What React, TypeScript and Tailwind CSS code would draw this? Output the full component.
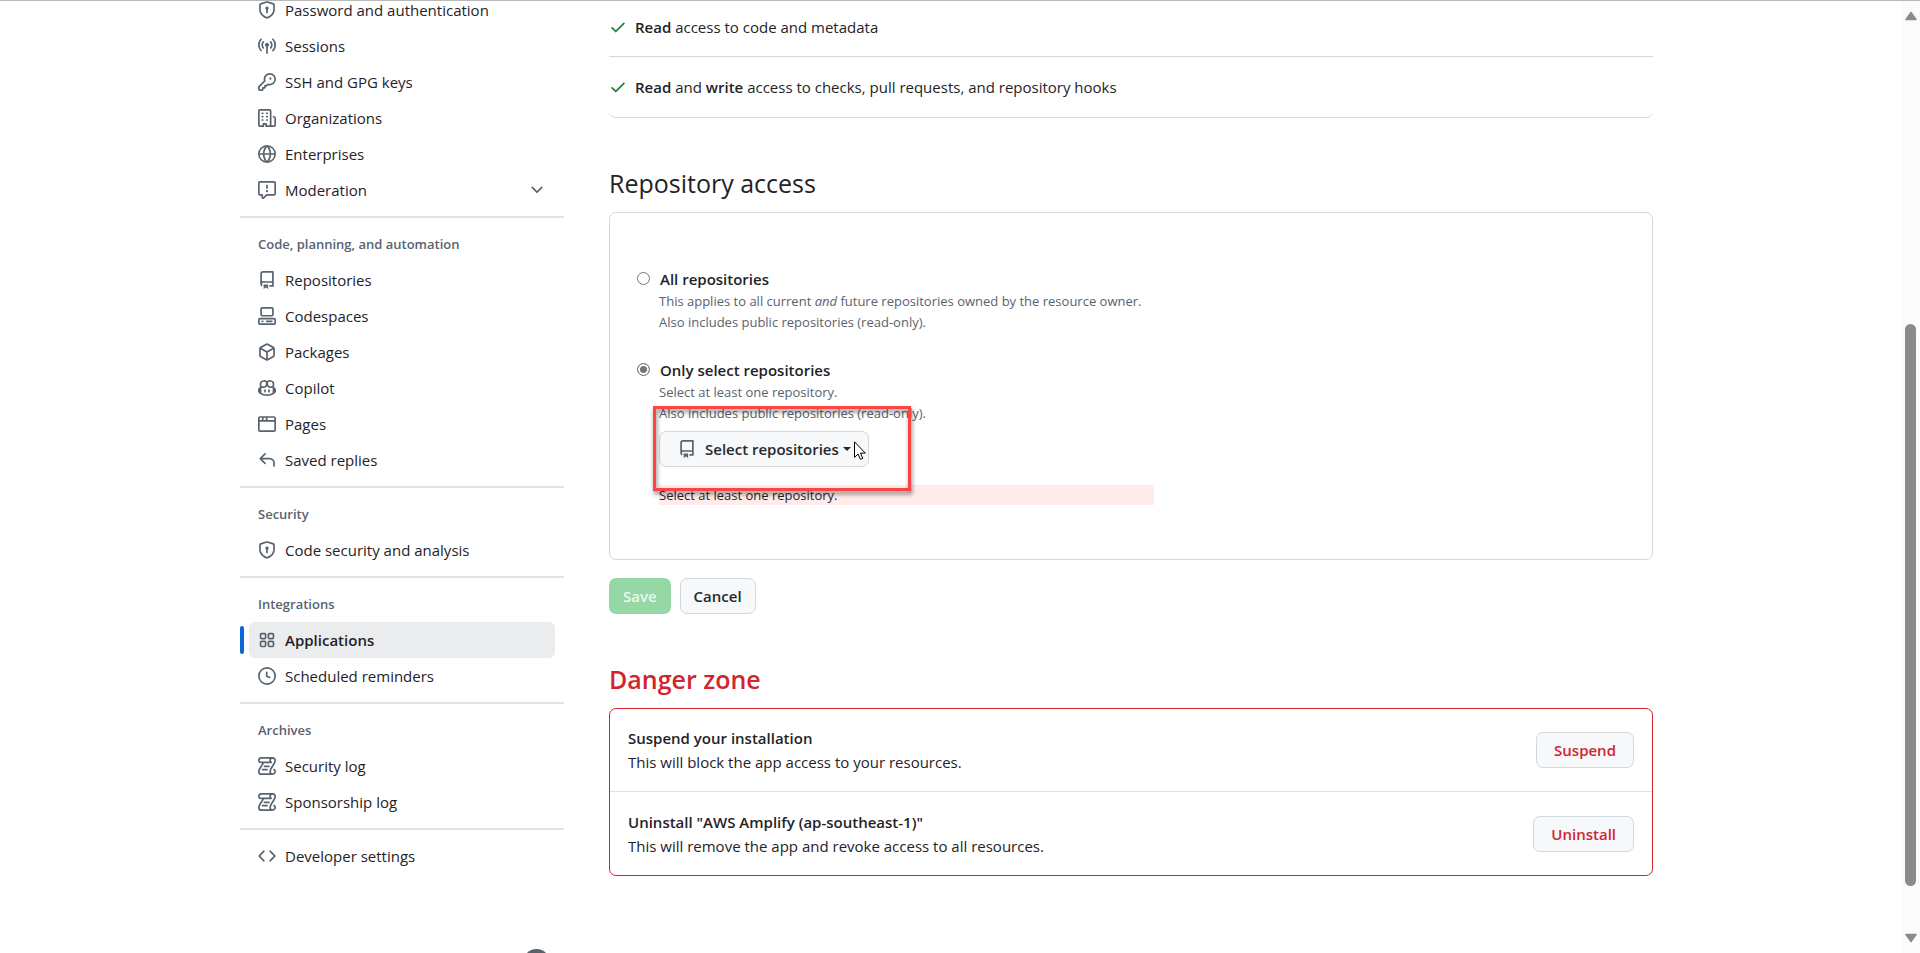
import type { ReactNode } from "react";

const paths = {
  shieldLock:
    "m8.533.133 5.25 1.68A1.75 1.75 0 0 1 15 3.48V7c0 1.566-.32 3.182-1.303 4.682-.983 1.498-2.585 2.813-5.032 3.855a1.697 1.697 0 0 1-1.33 0c-2.447-1.042-4.049-2.357-5.032-3.855C1.32 10.182 1 8.566 1 7V3.48a1.755 1.755 0 0 1 1.217-1.667l5.25-1.68a1.748 1.748 0 0 1 1.066 0Zm-.61 1.429.001.001-5.25 1.68a.251.251 0 0 0-.174.237V7c0 1.36.275 2.666 1.057 3.859.784 1.194 2.121 2.342 4.366 3.298a.196.196 0 0 0 .154 0c2.245-.957 3.582-2.103 4.366-3.297C13.225 9.666 13.5 8.358 13.5 7V3.48a.25.25 0 0 0-.174-.238l-5.25-1.68a.25.25 0 0 0-.153 0ZM9.5 6.5c0 .536-.286 1.032-.75 1.3v2.45a.75.75 0 0 1-1.5 0V7.8A1.5 1.5 0 1 1 9.5 6.5Z",
  broadcast:
    "M8.75 8.582v5.668a.75.75 0 0 1-1.5 0V8.582a1.75 1.75 0 1 1 1.5 0Zm3.983-7.125a.75.75 0 0 1 1.06.026A7.976 7.976 0 0 1 16 7c0 2.139-.84 4.083-2.207 5.517a.75.75 0 1 1-1.086-1.034A6.474 6.474 0 0 0 14.5 7a6.474 6.474 0 0 0-1.793-4.483.75.75 0 0 1 .026-1.06Zm-9.466 0c.3.286.312.76.026 1.06A6.474 6.474 0 0 0 1.5 7a6.47 6.47 0 0 0 1.793 4.483.75.75 0 0 1-1.086 1.034A7.973 7.973 0 0 1 0 7c0-2.139.84-4.083 2.207-5.517a.75.75 0 0 1 1.06-.026Zm8.556 2.321A4.988 4.988 0 0 1 13 7a4.988 4.988 0 0 1-1.177 3.222.75.75 0 1 1-1.146-.967A3.487 3.487 0 0 0 11.5 7c0-.86-.309-1.645-.823-2.255a.75.75 0 0 1 1.146-.967Zm-6.492.958A3.48 3.48 0 0 0 4.5 7a3.48 3.48 0 0 0 .823 2.255.75.75 0 0 1-1.146.967A4.981 4.981 0 0 1 3 7a4.982 4.982 0 0 1 1.188-3.236.75.75 0 1 1 1.143.972Z",
  key: "M10.5 0a5.499 5.499 0 1 1-1.288 10.848l-.932.932a.749.749 0 0 1-.53.22H7v.75a.749.749 0 0 1-.22.53l-.5.5a.749.749 0 0 1-.53.22H5v.75a.749.749 0 0 1-.22.53l-.5.5a.749.749 0 0 1-.53.22h-2A1.75 1.75 0 0 1 0 14.25v-2c0-.199.079-.389.22-.53l4.932-4.932A5.5 5.5 0 0 1 10.5 0Zm-4 5.5c-.001.431.069.86.205 1.269a.75.75 0 0 1-.181.768L1.5 12.56v1.69c0 .138.112.25.25.25h1.69l.06-.06v-1.19a.75.75 0 0 1 .75-.75h1.19l.06-.06v-1.19a.75.75 0 0 1 .75-.75h1.19l1.023-1.025a.75.75 0 0 1 .768-.18A4 4 0 1 0 6.5 5.5ZM11 6a1 1 0 1 1 0-2 1 1 0 0 1 0 2Z",
  organization:
    "M1.75 16A1.75 1.75 0 0 1 0 14.25V1.75C0 .784.784 0 1.75 0h8.5C11.216 0 12 .784 12 1.75v12.5c0 .085-.006.168-.018.25h2.268a.25.25 0 0 0 .25-.25V8.285a.25.25 0 0 0-.111-.208l-1.055-.703a.749.749 0 1 1 .832-1.248l1.055.703c.487.325.779.871.779 1.456v5.965A1.75 1.75 0 0 1 14.25 16h-3.5a.766.766 0 0 1-.197-.026c-.099.017-.2.026-.303.026h-3a.75.75 0 0 1-.75-.75V14h-1v1.25a.75.75 0 0 1-.75.75Zm-.25-1.75c0 .138.112.25.25.25H4v-1.25a.75.75 0 0 1 .75-.75h2.5a.75.75 0 0 1 .75.75v1.25h2.25a.25.25 0 0 0 .25-.25V1.75a.25.25 0 0 0-.25-.25h-8.5a.25.25 0 0 0-.25.25ZM3.75 6h.5a.75.75 0 0 1 0 1.5h-.5a.75.75 0 0 1 0-1.5ZM3 3.75A.75.75 0 0 1 3.75 3h.5a.75.75 0 0 1 0 1.5h-.5A.75.75 0 0 1 3 3.75Zm4 3A.75.75 0 0 1 7.75 6h.5a.75.75 0 0 1 0 1.5h-.5A.75.75 0 0 1 7 6.75ZM7.75 3h.5a.75.75 0 0 1 0 1.5h-.5a.75.75 0 0 1 0-1.5ZM3 9.75A.75.75 0 0 1 3.75 9h.5a.75.75 0 0 1 0 1.5h-.5A.75.75 0 0 1 3 9.75ZM7.75 9h.5a.75.75 0 0 1 0 1.5h-.5a.75.75 0 0 1 0-1.5Z",
  globe:
    "M8 0a8 8 0 1 1 0 16A8 8 0 0 1 8 0ZM5.78 8.75a9.64 9.64 0 0 0 1.363 4.177c.255.426.542.832.857 1.215.245-.296.551-.705.857-1.215A9.64 9.64 0 0 0 10.22 8.75Zm4.44-1.5a9.64 9.64 0 0 0-1.363-4.177c-.307-.51-.612-.919-.857-1.215a9.927 9.927 0 0 0-.857 1.215A9.64 9.64 0 0 0 5.78 7.25Zm-5.944 1.5H1.543a6.507 6.507 0 0 0 4.666 5.5c-.123-.181-.24-.365-.352-.552-.715-1.192-1.437-2.874-1.581-4.948Zm-2.733-1.5h2.733c.144-2.074.866-3.756 1.58-4.948.12-.197.237-.381.353-.552a6.507 6.507 0 0 0-4.666 5.5Zm10.181 1.5c-.144 2.074-.866 3.756-1.58 4.948-.12.197-.237.381-.353.552a6.507 6.507 0 0 0 4.666-5.5Zm2.733-1.5a6.507 6.507 0 0 0-4.666-5.5c.123.181.24.365.353.552.714 1.192 1.436 2.874 1.58 4.948Z",
  report:
    "M0 1.75C0 .784.784 0 1.75 0h12.5C15.216 0 16 .784 16 1.75v9.5A1.75 1.75 0 0 1 14.25 13H8.06l-2.573 2.573A1.458 1.458 0 0 1 3 14.543V13H1.75A1.75 1.75 0 0 1 0 11.25Zm1.75-.25a.25.25 0 0 0-.25.25v9.5c0 .138.112.25.25.25h2a.75.75 0 0 1 .75.75v2.19l2.72-2.72a.749.749 0 0 1 .53-.22h6.5a.25.25 0 0 0 .25-.25v-9.5a.25.25 0 0 0-.25-.25Zm7 2.25v2.5a.75.75 0 0 1-1.5 0v-2.5a.75.75 0 0 1 1.5 0ZM9 9a1 1 0 1 1-2 0 1 1 0 0 1 2 0Z",
  chevronDown:
    "M12.78 5.22a.749.749 0 0 1 0 1.06l-4.25 4.25a.749.749 0 0 1-1.06 0L3.22 6.28a.749.749 0 1 1 1.06-1.06L8 8.939l3.72-3.719a.749.749 0 0 1 1.06 0Z",
  repo: "M2 2.5A2.5 2.5 0 0 1 4.5 0h8.75a.75.75 0 0 1 .75.75v12.5a.75.75 0 0 1-.75.75h-2.5a.75.75 0 0 1 0-1.5h1.75v-2h-8a1 1 0 0 0-.714 1.7.75.75 0 1 1-1.072 1.05A2.495 2.495 0 0 1 2 11.5Zm10.5-1h-8a1 1 0 0 0-1 1v6.708A2.486 2.486 0 0 1 4.5 9h8ZM5 12.25a.25.25 0 0 1 .25-.25h3.5a.25.25 0 0 1 .25.25v3.25a.25.25 0 0 1-.4.2l-1.45-1.087a.249.249 0 0 0-.3 0L5.4 15.7a.25.25 0 0 1-.4-.2Z",
  codespaces:
    "M0 11.25c0-.966.784-1.75 1.75-1.75h12.5c.966 0 1.75.784 1.75 1.75v3A1.75 1.75 0 0 1 14.25 16H1.75A1.75 1.75 0 0 1 0 14.25Zm2-9.5C2 .784 2.784 0 3.75 0h8.5C13.216 0 14 .784 14 1.75v5a1.75 1.75 0 0 1-1.75 1.75h-8.5A1.75 1.75 0 0 1 2 6.75Zm1.75-.25a.25.25 0 0 0-.25.25v5c0 .138.112.25.25.25h8.5a.25.25 0 0 0 .25-.25v-5a.25.25 0 0 0-.25-.25Zm-2 9.5a.25.25 0 0 0-.25.25v3c0 .138.112.25.25.25h12.5a.25.25 0 0 0 .25-.25v-3a.25.25 0 0 0-.25-.25ZM7 12.75a.75.75 0 0 1 .75-.75h4.5a.75.75 0 0 1 0 1.5h-4.5a.75.75 0 0 1-.75-.75Zm-4 0a.75.75 0 0 1 .75-.75h.5a.75.75 0 0 1 0 1.5h-.5a.75.75 0 0 1-.75-.75Z",
  package:
    "m8.878.392 5.25 3.045c.54.314.872.89.872 1.514v6.098a1.75 1.75 0 0 1-.872 1.514l-5.25 3.045a1.75 1.75 0 0 1-1.756 0l-5.25-3.045A1.75 1.75 0 0 1 1 11.049V4.951c0-.624.332-1.201.872-1.514L7.122.392a1.75 1.75 0 0 1 1.756 0ZM7.875 1.69l-4.63 2.685L8 7.133l4.755-2.758-4.63-2.685a.248.248 0 0 0-.25 0ZM2.5 5.677v5.372c0 .09.047.171.125.216l4.625 2.683V8.432Zm6.25 8.271 4.625-2.683a.25.25 0 0 0 .125-.216V5.677L8.75 8.432Z",
  copilot:
    "M7.998 15.035c-4.562 0-7.873-2.914-7.998-3.749V9.338c.085-.628.677-1.686 1.588-2.065.013-.07.024-.143.036-.218.029-.183.06-.384.126-.612-.201-.508-.254-1.084-.254-1.656 0-.87.128-1.769.693-2.484.579-.733 1.494-1.124 2.724-1.261 1.206-.134 2.262.034 2.944.765.05.053.096.108.139.165.044-.057.094-.112.143-.165.682-.731 1.738-.899 2.944-.765 1.23.137 2.145.528 2.724 1.261.566.715.693 1.614.693 2.484 0 .572-.053 1.148-.254 1.656.066.228.098.429.126.612.012.076.024.148.037.218.924.385 1.522 1.471 1.591 2.095v1.872c0 .766-3.351 3.795-8.002 3.795Zm0-1.485c2.28 0 4.584-1.11 5.002-1.433V7.862l-.023-.116c-.49.21-1.075.291-1.727.291-1.146 0-2.059-.327-2.71-.991A3.222 3.222 0 0 1 8 6.303a3.24 3.24 0 0 1-.544.743c-.65.664-1.563.991-2.71.991-.652 0-1.236-.081-1.727-.291l-.023.116v4.255c.419.323 2.722 1.433 5.002 1.433ZM6.762 2.83c-.193-.206-.637-.413-1.682-.297-1.019.113-1.479.404-1.713.7-.247.312-.369.789-.369 1.554 0 .793.129 1.171.308 1.371.162.181.519.379 1.442.379.853 0 1.339-.235 1.638-.54.315-.322.527-.827.617-1.553.117-.935-.037-1.395-.241-1.614Zm4.155-.297c-1.044-.116-1.488.091-1.681.297-.204.219-.359.679-.242 1.614.091.726.303 1.231.618 1.553.299.305.784.54 1.638.54.922 0 1.28-.198 1.442-.379.179-.2.308-.578.308-1.371 0-.765-.123-1.242-.37-1.554-.233-.296-.693-.587-1.713-.7ZM6.25 9.037a.75.75 0 0 1 .75.75v1.501a.75.75 0 0 1-1.5 0V9.787a.75.75 0 0 1 .75-.75Zm4.25.75v1.501a.75.75 0 0 1-1.5 0V9.787a.75.75 0 0 1 1.5 0Z",
  browser:
    "M0 2.75C0 1.784.784 1 1.75 1h12.5c.966 0 1.75.784 1.75 1.75v10.5A1.75 1.75 0 0 1 14.25 15H1.75A1.75 1.75 0 0 1 0 13.25ZM14.5 6h-13v7.25c0 .138.112.25.25.25h12.5a.25.25 0 0 0 .25-.25Zm-6-3.5v2h6V2.75a.25.25 0 0 0-.25-.25ZM5 2.5v2h2v-2Zm-3.25 0a.25.25 0 0 0-.25.25V4.5h2v-2Z",
  reply:
    "M6.78 1.97a.75.75 0 0 1 0 1.06L3.81 6h6.44A4.75 4.75 0 0 1 15 10.75v2.5a.75.75 0 0 1-1.5 0v-2.5a3.25 3.25 0 0 0-3.25-3.25H3.81l2.97 2.97a.749.749 0 0 1-.326 1.275.749.749 0 0 1-.734-.215L1.47 7.28a.75.75 0 0 1 0-1.06l4.25-4.25a.75.75 0 0 1 1.06 0Z",
  apps: "M1.5 3.25c0-.966.784-1.75 1.75-1.75h2.5c.966 0 1.75.784 1.75 1.75v2.5A1.75 1.75 0 0 1 5.75 7.5h-2.5A1.75 1.75 0 0 1 1.5 5.75Zm7 0c0-.966.784-1.75 1.75-1.75h2.5c.966 0 1.75.784 1.75 1.75v2.5a1.75 1.75 0 0 1-1.75 1.75h-2.5A1.75 1.75 0 0 1 8.5 5.75Zm-7 7c0-.966.784-1.75 1.75-1.75h2.5c.966 0 1.75.784 1.75 1.75v2.5a1.75 1.75 0 0 1-1.75 1.75h-2.5a1.75 1.75 0 0 1-1.75-1.75Zm7 0c0-.966.784-1.75 1.75-1.75h2.5c.966 0 1.75.784 1.75 1.75v2.5a1.75 1.75 0 0 1-1.75 1.75h-2.5a1.75 1.75 0 0 1-1.75-1.75ZM3.25 3a.25.25 0 0 0-.25.25v2.5c0 .138.112.25.25.25h2.5A.25.25 0 0 0 6 5.75v-2.5A.25.25 0 0 0 5.75 3Zm7 0a.25.25 0 0 0-.25.25v2.5c0 .138.112.25.25.25h2.5a.25.25 0 0 0 .25-.25v-2.5a.25.25 0 0 0-.25-.25Zm-7 7a.25.25 0 0 0-.25.25v2.5c0 .138.112.25.25.25h2.5a.25.25 0 0 0 .25-.25v-2.5a.25.25 0 0 0-.25-.25Zm7 0a.25.25 0 0 0-.25.25v2.5c0 .138.112.25.25.25h2.5a.25.25 0 0 0 .25-.25v-2.5a.25.25 0 0 0-.25-.25Z",
  clock:
    "M8 0a8 8 0 1 1 0 16A8 8 0 0 1 8 0ZM1.5 8a6.5 6.5 0 1 0 13 0 6.5 6.5 0 0 0-13 0Zm7-3.25v2.992l2.028.812a.75.75 0 0 1-.557 1.392l-2.5-1A.751.751 0 0 1 7 8.25v-3.5a.75.75 0 0 1 1.5 0Z",
  log: "M5 8.25a.75.75 0 0 1 .75-.75h4a.75.75 0 0 1 0 1.5h-4A.75.75 0 0 1 5 8.25ZM4 10.5A.75.75 0 0 0 4 12h4a.75.75 0 0 0 0-1.5H4ZM13-.005c1.654 0 3 1.328 3 3 0 .982-.338 1.933-.783 2.818-.443.879-1.028 1.758-1.582 2.588l-.011.017c-.568.853-1.104 1.659-1.501 2.446-.398.789-.623 1.494-.623 2.136a1.5 1.5 0 1 0 2.333-1.248.75.75 0 0 1 .834-1.246A3 3 0 0 1 13 16H3a3 3 0 0 1-3-3c0-1.582.891-3.135 1.777-4.506.209-.322.418-.637.623-.946.473-.709.923-1.386 1.287-2.048H2.51c-.576 0-1.381-.133-1.907-.783A2.68 2.68 0 0 1 0 2.995a3 3 0 0 1 3-3Zm0 1.5a1.5 1.5 0 0 0-1.5 1.5c0 .476.223.834.667 1.132A.75.75 0 0 1 11.75 5.5H5.368c-.467 1.003-1.141 2.015-1.773 2.963-.192.289-.381.571-.558.845C2.13 10.711 1.5 11.916 1.5 13A1.5 1.5 0 0 0 3 14.5h7.401A2.989 2.989 0 0 1 10 13c0-.979.338-1.928.784-2.812.441-.874 1.023-1.748 1.575-2.576l.017-.026c.568-.853 1.103-1.658 1.501-2.448.398-.79.623-1.497.623-2.143 0-.838-.669-1.5-1.5-1.5Zm-10 0a1.5 1.5 0 0 0-1.5 1.5c0 .321.1.569.27.778.097.12.325.227.74.227h7.674A2.737 2.737 0 0 1 10 2.995c0-.546.146-1.059.401-1.5Z",
  code: "m11.28 3.22 4.25 4.25a.75.75 0 0 1 0 1.06l-4.25 4.25a.749.749 0 0 1-1.275-.326.749.749 0 0 1 .215-.734L13.94 8l-3.72-3.72a.749.749 0 0 1 .326-1.275.749.749 0 0 1 .734.215Zm-6.56 0a.751.751 0 0 1 1.042.018.751.751 0 0 1 .018 1.042L2.06 8l3.72 3.72a.749.749 0 0 1-.326 1.275.749.749 0 0 1-.734-.215L.47 8.53a.75.75 0 0 1 0-1.06Z",
  check:
    "M13.78 4.22a.75.75 0 0 1 0 1.06l-7.25 7.25a.75.75 0 0 1-1.06 0L2.22 9.28a.751.751 0 0 1 .018-1.042.751.751 0 0 1 1.042-.018L6 10.94l6.72-6.72a.75.75 0 0 1 1.06 0Z",
  mark: "M8 0c4.42 0 8 3.58 8 8a8.013 8.013 0 0 1-5.45 7.59c-.4.08-.55-.17-.55-.38 0-.27.01-1.13.01-2.2 0-.75-.25-1.23-.54-1.48 1.78-.2 3.65-.88 3.65-3.95 0-.88-.31-1.59-.82-2.15.08-.2.36-1.02-.08-2.12 0 0-.67-.22-2.2.82-.64-.18-1.32-.27-2-.27-.68 0-1.36.09-2 .27-1.53-1.03-2.2-.82-2.2-.82-.44 1.1-.16 1.92-.08 2.12-.51.56-.82 1.28-.82 2.15 0 3.06 1.86 3.75 3.64 3.95-.23.2-.44.55-.51 1.07-.46.21-1.61.55-2.33-.66-.15-.24-.6-.83-1.23-.82-.67.01-.27.38.01.53.34.19.73.9.82 1.13.16.45.68 1.31 2.69.94 0 .67.01 1.3.01 1.49 0 .21-.15.45-.55.38A7.995 7.995 0 0 1 0 8c0-4.42 3.58-8 8-8Z",
};

type IconName = keyof typeof paths;

function Icon({ name, className = "size-[18px] text-[#59636e]" }: { name: IconName; className?: string }) {
  return (
    <svg viewBox="0 0 16 16" fill="currentColor" aria-hidden="true" className={`shrink-0 ${className}`}>
      <path d={paths[name]} />
    </svg>
  );
}

type Item = { icon: IconName; label: string; active?: boolean; expandable?: boolean };

const groups: { title?: string; items: Item[] }[] = [
  {
    items: [
      { icon: "shieldLock", label: "Password and authentication" },
      { icon: "broadcast", label: "Sessions" },
      { icon: "key", label: "SSH and GPG keys" },
      { icon: "organization", label: "Organizations" },
      { icon: "globe", label: "Enterprises" },
      { icon: "report", label: "Moderation", expandable: true },
    ],
  },
  {
    title: "Code, planning, and automation",
    items: [
      { icon: "repo", label: "Repositories" },
      { icon: "codespaces", label: "Codespaces" },
      { icon: "package", label: "Packages" },
      { icon: "copilot", label: "Copilot" },
      { icon: "browser", label: "Pages" },
      { icon: "reply", label: "Saved replies" },
    ],
  },
  { title: "Security", items: [{ icon: "shieldLock", label: "Code security and analysis" }] },
  {
    title: "Integrations",
    items: [
      { icon: "apps", label: "Applications", active: true },
      { icon: "clock", label: "Scheduled reminders" },
    ],
  },
  {
    title: "Archives",
    items: [
      { icon: "log", label: "Security log" },
      { icon: "log", label: "Sponsorship log" },
    ],
  },
  { items: [{ icon: "code", label: "Developer settings" }] },
];

function NavItem({ icon, label, active, expandable }: Item) {
  const row = "flex h-9 w-full items-center gap-[9px] rounded-md px-[9px] text-left";
  if (expandable) {
    return (
      <li className="px-[9px]">
        <button type="button" aria-expanded="false" className={row}>
          <Icon name={icon} />
          <span className="grow">{label}</span>
          <Icon name="chevronDown" />
        </button>
      </li>
    );
  }
  return (
    <li className="relative px-[9px]">
      {active && <span className="absolute top-1 bottom-1 left-0 w-1 rounded-md bg-[#0969da]" />}
      <a
        href="#"
        aria-current={active ? "page" : undefined}
        className={active ? `${row} bg-[#ebecee] font-semibold` : row}
      >
        <Icon name={icon} />
        {label}
      </a>
    </li>
  );
}

function Sidebar() {
  return (
    <nav aria-label="Settings" className="w-[324px] shrink-0">
      {groups.map((group, i) => (
        <section key={i} className={i > 0 ? "mt-2 border-t-2 border-[#dfe3e8] pt-2" : ""}>
          {group.title && (
            <h3 className="flex h-9 items-center px-[18px] text-[13px] font-semibold text-[#59636e]">{group.title}</h3>
          )}
          <ul>
            {group.items.map((item) => (
              <NavItem key={item.label} {...item} />
            ))}
          </ul>
        </section>
      ))}
    </nav>
  );
}

function Button({ children, className = "px-[13px] text-[#25292e]" }: { children: ReactNode; className?: string }) {
  return (
    <button
      type="button"
      className={`flex h-9 items-center rounded-[7px] border border-[#d1d9e0] bg-[#f6f8fa] font-semibold ${className}`}
    >
      {children}
    </button>
  );
}

function DangerRow({ title, text, action }: { title: string; text: string; action: string }) {
  return (
    <li className="flex h-[83px] items-center justify-between px-[18px]">
      <div className="leading-6">
        <strong className="block font-semibold">{title}</strong>
        <p>{text}</p>
      </div>
      <Button className="px-[17px] text-[#d1242f]">{action}</Button>
    </li>
  );
}

function Permissions() {
  return (
    <ul className="divide-y divide-[#d1d9e0] rounded-b-[7px] border-b border-[#d1d9e0]">
      <li className="flex h-[60px] items-center gap-2">
        <Icon name="check" className="size-[18px] text-[#1a7f37]" />
        <span>
          <strong className="font-semibold">Read</strong> access to code and metadata
        </span>
      </li>
      <li className="flex h-[60px] items-center gap-2">
        <Icon name="check" className="size-[18px] text-[#1a7f37]" />
        <span>
          <strong className="font-semibold">Read</strong> and <strong className="font-semibold">write</strong> access to
          checks, pull requests, and repository hooks
        </span>
      </li>
    </ul>
  );
}

const radio =
  "mt-[5px] size-[13px] shrink-0 appearance-none rounded-full border border-[#767676] bg-white checked:bg-[#767676] checked:shadow-[inset_0_0_0_2px_white]";

function RepositoryAccess() {
  return (
    <form>
      <div className="rounded-[7px] border border-[#d1d9e0] px-[27px] py-[54px]">
        <div className="flex gap-[9px]">
          <input id="all" type="radio" name="access" className={radio} aria-describedby="all-note" />
          <div>
            <label htmlFor="all" className="block pl-px font-semibold">
              All repositories
            </label>
            <p id="all-note" className="text-[13px] leading-[21px] text-[#59636e]">
              This applies to all current <em>and</em> future repositories owned by the resource owner.
              <br />
              Also includes public repositories (read-only).
            </p>
          </div>
        </div>
        <div className="mt-[25px] flex gap-[9px]">
          <input id="select" type="radio" name="access" defaultChecked className={radio} aria-describedby="select-note" />
          <div className="grow">
            <label htmlFor="select" className="block pl-px font-semibold">
              Only select repositories
            </label>
            <p id="select-note" className="text-[13px] leading-[21px] text-[#59636e]">
              Select at least one repository.
              <br />
              Also includes public repositories (read-only).
            </p>
            <div className="relative mt-[7px] w-fit">
              <Button className="gap-[9px] pr-[17px] pl-[18px] text-[#25292e]">
                <Icon name="repo" />
                <span className="flex items-center gap-1">
                  Select repositories
                  <span className="border-x-4 border-t-4 border-x-transparent border-t-current" />
                </span>
              </Button>
              <span className="pointer-events-none absolute -top-[25px] -left-[6px] z-10 h-[85px] w-[258px] border-3 border-[#fd4444] drop-shadow-[1px_3px_2px_rgba(0,0,0,0.5)]" />
              <svg
                viewBox="0 0 12 19"
                aria-hidden="true"
                className="pointer-events-none absolute top-[10px] left-[195px] z-20 h-[19px] w-3"
              >
                <path
                  d="M.5.8v15.6l3.6-3.4 2.3 5.3 2.4-1-2.3-5.2h4.8Z"
                  fill="white"
                  stroke="black"
                  strokeWidth="1"
                />
              </svg>
            </div>
            <p className="mt-[18px] max-w-[495px] bg-[#ffebe9] text-[13px] leading-5">Select at least one repository.</p>
          </div>
        </div>
      </div>
      <div className="mt-[18px] flex gap-[9px]">
        <button type="submit" disabled className="h-9 rounded-[7px] bg-[#95d8a6] px-[14px] font-semibold text-[#eaf7ed]">
          Save
        </button>
        <Button>Cancel</Button>
      </div>
    </form>
  );
}

function Scrollbar() {
  return (
    <div aria-hidden="true" className="flex w-[19px] shrink-0 flex-col items-center bg-[#fbfbfb] py-[10px]">
      <svg viewBox="0 0 12 10" className="h-[10px] w-3 text-[#8b8b8b]">
        <path d="M6 1.5 11 8.5H1Z" fill="currentColor" stroke="currentColor" strokeWidth="1.5" strokeLinejoin="round" />
      </svg>
      <div className="grow-[303]" />
      <div className="w-[11px] grow-[561] rounded-full bg-[#8b8b8b]" />
      <div className="grow-[47]" />
      <svg viewBox="0 0 12 10" className="h-[10px] w-3 text-[#8b8b8b]">
        <path d="M6 8.5 1 1.5h10Z" fill="currentColor" stroke="currentColor" strokeWidth="1.5" strokeLinejoin="round" />
      </svg>
    </div>
  );
}

export default function App() {
  return (
    <div className="flex h-screen overflow-hidden border-t border-[#bababa] bg-white font-['Open_Sans','Noto_Sans',sans-serif] text-[15px] leading-6 text-[#1f2328]">
      <div className="min-w-0 grow overflow-hidden">
        <div className="mx-auto max-w-[1439px] pr-[17px] pl-[9px]">
          <div className="-mt-[9px] flex gap-[45px]">
            <Sidebar />
            <main className="min-w-0 grow pt-[5px]">
              <Permissions />
              <h2 className="mt-[45px] mb-[9px] text-[25px] leading-10">Repository access</h2>
              <RepositoryAccess />
              <h2 className="mt-[45px] mb-[9px] text-[25px] leading-10 font-semibold text-[#d1242f]">Danger zone</h2>
              <ul className="divide-y divide-[#dfe1e3] rounded-[7px] border border-[#d1242f]">
                <DangerRow title="Suspend your installation" text="This will block the app access to your resources." action="Suspend" />
                <DangerRow
                  title={'Uninstall "AWS Amplify (ap-southeast-1)"'}
                  text="This will remove the app and revoke access to all resources."
                  action="Uninstall"
                />
              </ul>
            </main>
          </div>
          <footer className="mt-[73px] pl-[283px]">
            <a href="#" aria-label="GitHub" className="block w-fit">
              <Icon name="mark" className="size-[27px] text-[#59636e]" />
            </a>
          </footer>
        </div>
      </div>
      <Scrollbar />
    </div>
  );
}
